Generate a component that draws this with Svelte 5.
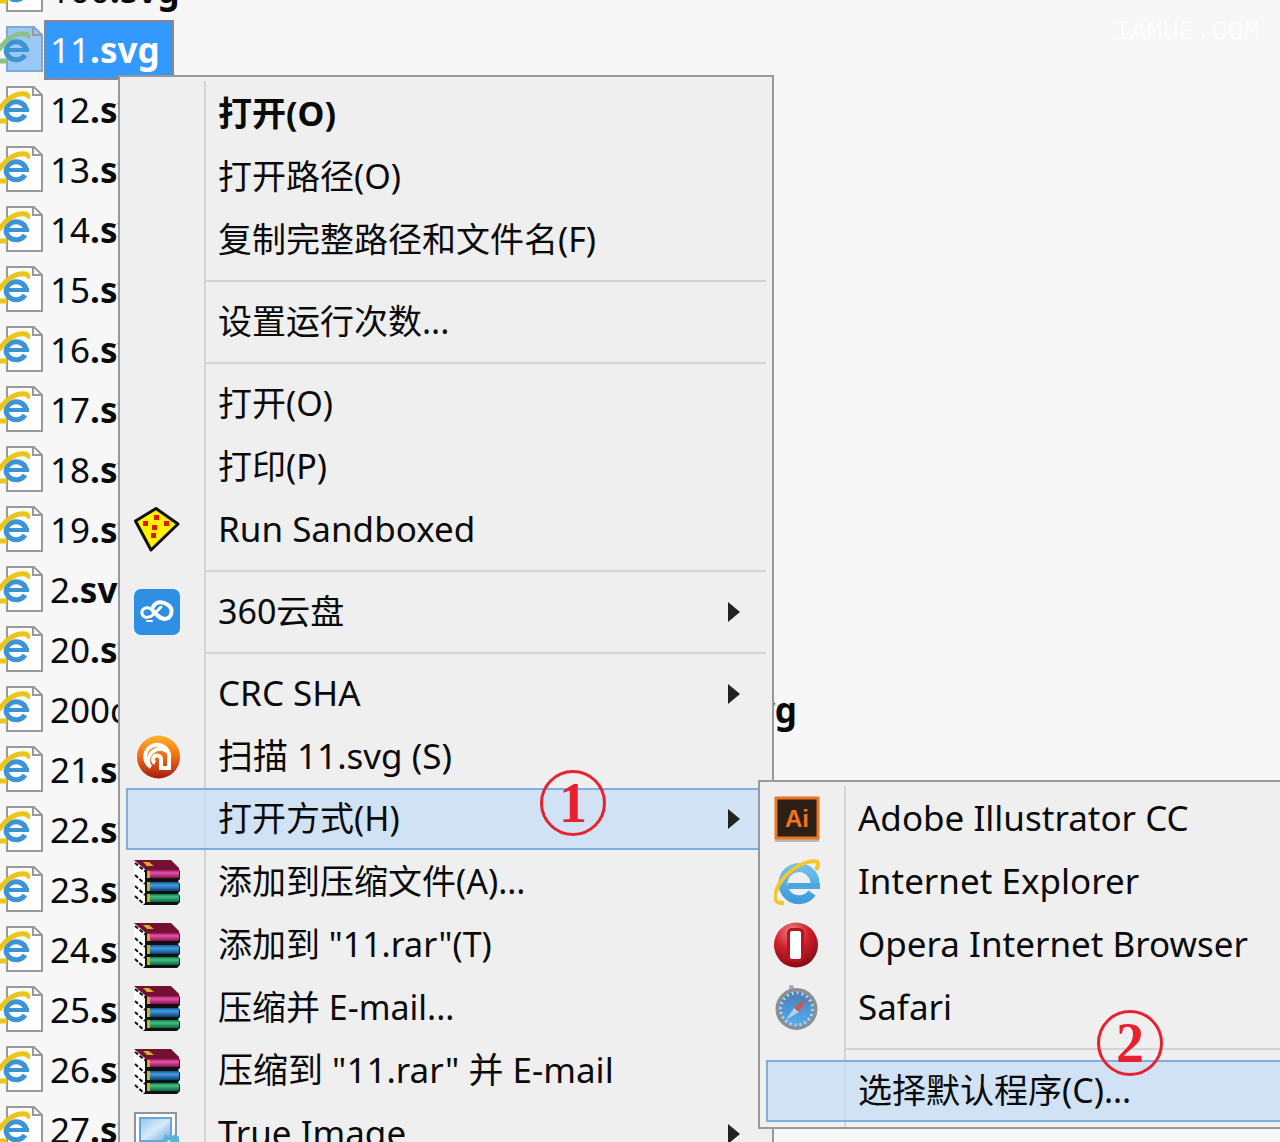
<script>
  const names = ['100', '11', '12', '13', '14', '15', '16', '17', '18', '19', '2', '20', '200', '21', '22', '23', '24', '25', '26', '27'];
  const files = names.map((n) => ({ base: n === '200' ? '200d' : n, long: n === '200', selected: n === '11' }));

  const menu = [
    { label: '打开(O)', bold: true },
    { label: '打开路径(O)' },
    { label: '复制完整路径和文件名(F)' },
    { sep: true },
    { label: '设置运行次数...' },
    { sep: true },
    { label: '打开(O)' },
    { label: '打印(P)' },
    { label: 'Run Sandboxed', icon: 'sandbox', latin: true },
    { sep: true },
    { label: '360云盘', icon: 'cloud', sub: true },
    { sep: true },
    { label: 'CRC SHA', sub: true, latin: true },
    { label: '扫描 11.svg (S)', icon: 'scan', latin: true },
    { label: '打开方式(H)', sub: true, active: true },
    { label: '添加到压缩文件(A)...', icon: 'rar' },
    { label: '添加到 "11.rar"(T)', icon: 'rar' },
    { label: '压缩并 E-mail...', icon: 'rar' },
    { label: '压缩到 "11.rar" 并 E-mail', icon: 'rar', latin: true },
    { label: 'True Image', icon: 'image', sub: true, latin: true }
  ];

  const openWith = [
    { label: 'Adobe Illustrator CC', icon: 'ai', latin: true },
    { label: 'Internet Explorer', icon: 'ie', latin: true },
    { label: 'Opera Internet Browser', icon: 'opera', latin: true },
    { label: 'Safari', icon: 'safari', latin: true },
    { sep: true },
    { label: '选择默认程序(C)...', active: true }
  ];
</script>

{#snippet glyph(name)}
  <svg class="icon" viewBox="0 0 46 46" aria-hidden="true">
    {#if name === 'sandbox'}
      <path d="M1.500 14 L22 1.500 L44 17 L17 43 Z" fill="#fff200" stroke="#111" stroke-width="3" stroke-linejoin="round" />
      <g fill="#e8140c"><path d="M20 8h5v5h-5zM9 14h5v5H9zM30 14h5v5h-5zM18 18h5v5h-5zM17 26h5v5h-5z" /></g>
    {:else if name === 'cloud'}
      <rect x="0" y="0" width="46" height="46" rx="7" fill="#2f8fe3" />
      <g fill="none" stroke="#fff" stroke-linecap="round">
        <path d="M26 29L17 20C12 17 7 20 8 25C10 30 16 29 20 25L27 18" stroke-width="3" />
        <path d="M19 18C22 12 29 12 34 16C40 20 38 29 31 30C26 30 23 26 19 22" stroke-width="4" />
        <path d="M13 32H18" stroke-width="2" />
      </g>
    {:else if name === 'scan'}
      <circle cx="24.500" cy="23" r="21.500" fill="url(#scanFill)" />
      <path d="M17 33A12 12 0 1 1 35 25V34H27V26A4 4 0 1 0 21 29" fill="none" stroke="#fff" stroke-width="4" />
      <path d="M15 31A12 12 0 0 1 33 17" fill="none" stroke="#fff" stroke-width="4" />
    {:else if name === 'rar'}
      <path d="M0 2L12 10V46L0 35Z" fill="#fff" />
      <path d="M11 9H44L46 12V20L44 22L46 25V32L44 34L46 37V43L43 46H11Z" fill="#111" />
      <path d="M1 4L12 13M1 16L11 25M1 27L11 36M1 37L11 46" stroke="#111" stroke-width="2" stroke-dasharray="4 2" />
      <path d="M0 1H37L45 9V12H13Z" fill="#741032" />
      <path d="M13 11H45V19H13Z" fill="url(#pinkFill)" />
      <path d="M13 23H45V32H13Z" fill="url(#blueFill)" />
      <path d="M13 35H45V43H13Z" fill="url(#greenFill)" />
      <path d="M9 3h6l5 4h-7zM13 12h3v7h-3zM13 23h3v9h-3zM13 35h3v8h-3z" fill="#cdb52a" />
    {:else if name === 'image'}
      <rect x="1" y="2" width="41" height="33" fill="#fff" stroke="#8d969e" stroke-width="2" />
      <rect x="6" y="7" width="31" height="23" fill="url(#screenFill)" stroke="#6ba5d5" stroke-width="2" />
      <path d="M25 32l5-3 1-6 5 4 5-4 4 3v20H26z" fill="#54b4dc" />
      <path d="M31 32l4-3 4 4-4 5z" fill="#d9f3fb" />
    {:else if name === 'ai'}
      <rect x="1" y="3" width="44" height="43" fill="#b9b9b9" />
      <rect x="2" y="2" width="42" height="40" fill="#2b1f18" stroke="#ee7420" stroke-width="3" />
      <text class="ai" x="23" y="31" text-anchor="middle">Ai</text>
    {:else if name === 'ie'}
      <path d="M41 25A16 16 0 1 0 38 34" fill="none" stroke="url(#ieFill)" stroke-width="9" />
      <path d="M14 27H46" stroke="#4ba6dd" stroke-width="6" />
      <path d="M10 44C-8 46 4 22 17 12C28 3 44 -1 44 5Q44 8 42 11" fill="none" stroke="#f7c52c" stroke-width="4" />
    {:else if name === 'opera'}
      <ellipse cx="22" cy="23" rx="22" ry="22.500" fill="url(#operaFill)" />
      <rect x="13" y="6" width="17" height="34" rx="5" fill="#b3161f" />
      <rect x="16" y="9" width="11" height="28" rx="2" fill="#fff" />
    {:else if name === 'safari'}
      <rect x="15" y="0" width="5" height="6" rx="2" fill="#a9adb2" />
      <circle cx="22.500" cy="24" r="19" fill="url(#safariFill)" stroke="#8b9097" stroke-width="4" />
      <circle cx="22.500" cy="24" r="16" fill="none" stroke="#bcd0e2" stroke-width="3" stroke-dasharray="2 3" />
      <path d="M33 13L25 27l-5-4z" fill="#dd5348" />
      <path d="M12 35l8-12 5 4z" fill="#a9d4f3" />
    {/if}
  </svg>
{/snippet}

{#snippet items(list)}
  {#each list as item}
    {#if item.sep}
      <div class="sep" role="separator"></div>
    {:else}
      <button type="button" role="menuitem" class="item" class:bold={item.bold} class:latin={item.latin} class:active={item.active}>
        <span class="slot">{#if item.icon}{@render glyph(item.icon)}{/if}</span>
        <span class="label">{item.label}</span>
        {#if item.sub}
          <svg class="arrow" viewBox="0 0 12 20" aria-hidden="true"><path d="M0 0L12 10L0 20Z" /></svg>
        {/if}
      </button>
    {/if}
  {/each}
{/snippet}

<svg class="defs" aria-hidden="true">
  <defs>
    <linearGradient id="scanFill" x1="0" y1="0" x2="0" y2="1"><stop offset="0" stop-color="#ffb52e" /><stop offset=".5" stop-color="#ee6a14" /><stop offset="1" stop-color="#a51c10" /></linearGradient>
    <linearGradient id="pinkFill" x1="0" y1="0" x2="0" y2="1"><stop offset="0" stop-color="#a0105c" /><stop offset=".35" stop-color="#e058a8" /><stop offset="1" stop-color="#8b0f50" /></linearGradient>
    <linearGradient id="blueFill" x1="0" y1="0" x2="0" y2="1"><stop offset="0" stop-color="#0b5a9c" /><stop offset=".35" stop-color="#4a9bdc" /><stop offset="1" stop-color="#073f78" /></linearGradient>
    <linearGradient id="greenFill" x1="0" y1="0" x2="0" y2="1"><stop offset="0" stop-color="#0b7a48" /><stop offset=".35" stop-color="#45bd85" /><stop offset="1" stop-color="#06663a" /></linearGradient>
    <linearGradient id="screenFill" x1="0" y1="0" x2="1" y2="1"><stop offset="0" stop-color="#8ec4ee" /><stop offset=".5" stop-color="#d8ecfa" /><stop offset="1" stop-color="#5ea6df" /></linearGradient>
    <linearGradient id="ieFill" x1="0" y1="0" x2="0" y2="1"><stop offset="0" stop-color="#6cc0ea" /><stop offset="1" stop-color="#3f9ddb" /></linearGradient>
    <radialGradient id="operaFill" cx=".4" cy=".2" r=".8"><stop offset="0" stop-color="#f08080" /><stop offset=".5" stop-color="#cf1f2a" /><stop offset="1" stop-color="#8b0b12" /></radialGradient>
    <linearGradient id="safariFill" x1="0" y1="0" x2="0" y2="1"><stop offset="0" stop-color="#4a78b4" /><stop offset="1" stop-color="#56b4ee" /></linearGradient>
  </defs>
</svg>

<main class="desk">
  <ul class="files">
    {#each files as file}
      <li class="file" class:selected={file.selected}>
        <svg class="doc" viewBox="0 0 44 46" aria-hidden="true">
          <path class="sheet" d="M7 1H34L42 9V45H7Z" />
          <path class="fold" d="M33 1V9H41" />
          <path class="ring" d="M26 23A10 9 0 1 0 25 29" />
          <path class="bar" d="M8 24H29" />
          <path class="swoosh" d="M-1 24C6 13 16 6 26 8Q29 9 27 12M0 35H7" />
        </svg>
        <span class="name" class:long={file.long}><span>{file.base}{#if !file.long}<b>.svg</b>{/if}</span>{#if file.long}<b>.svg</b>{/if}</span>
      </li>
    {/each}
  </ul>

  <div class="menu main-menu" role="menu">{@render items(menu)}</div>
  <div class="menu sub-menu" role="menu">{@render items(openWith)}</div>

  <span class="step one">1</span>
  <span class="step two">2</span>
  <span class="mark">IAMUE.COM</span>
</main>

<style>
  :global(body) { margin: 0; background: #f7f7f7; }
  .defs { position: absolute; width: 0; height: 0; }
  .desk {
    position: relative;
    height: 100vh;
    overflow: hidden;
    background: #f7f7f7;
    color: #0a0a0a;
    font-family: "Noto Sans", "Noto Sans CJK SC", sans-serif;
    font-size: 34px;
  }
  .files { list-style: none; margin: -40px 0 0; padding: 0; font-size: 35px; }
  .file { display: flex; align-items: center; height: 60px; }
  .doc { width: 44px; height: 46px; flex: none; margin-bottom: 2px; }
  .sheet { fill: #fdfdfd; stroke: #999; stroke-width: 2; }
  .fold { fill: none; stroke: #999; stroke-width: 2; }
  .ring { fill: none; stroke: #3b94d4; stroke-width: 5; }
  .bar { fill: none; stroke: #3b94d4; stroke-width: 4; }
  .swoosh { fill: none; stroke: #ecc51c; stroke-width: 5; }
  .name { box-sizing: border-box; height: 60px; padding: 0 14px 0 6px; line-height: 60px; white-space: nowrap; }
  .long { display: flex; justify-content: space-between; width: 767px; }
  .selected .name { background: #3399ff; color: #fff; outline: 2px dotted #d9762b; outline-offset: -2px; }
  .selected .sheet { fill: #9bc8f5; stroke: #7fa9d6; }
  .selected .swoosh { stroke: #8fc08a; }

  .menu {
    position: absolute;
    box-sizing: border-box;
    width: 656px;
    padding: 5px 6px;
    border: 2px solid #999;
    background: linear-gradient(#d4d4d4, #d4d4d4) 84px 4px / 2px 100% no-repeat #efefef;
  }
  .main-menu { left: 118px; top: 75px; }
  .sub-menu { left: 758px; top: 780px; }
  .item {
    display: flex;
    align-items: center;
    box-sizing: border-box;
    width: 100%;
    height: 63px;
    padding: 0 24px 0 6px;
    border: 2px solid transparent;
    background: none;
    color: inherit;
    font: inherit;
    text-align: left;
  }
  .latin { font-size: 35px; }
  .active { height: 62px; border-color: #7eade0; background: rgba(195, 221, 246, 0.7); }
  .slot { display: flex; width: 84px; flex: none; }
  .icon { width: 46px; height: 46px; }
  .label { flex: 1; padding-bottom: 2px; white-space: nowrap; line-height: 56px; }
  .bold { font-weight: 700; }
  .arrow { width: 12px; height: 20px; fill: #222; }
  .sep { height: 19px; margin-left: 78px; background: linear-gradient(#d4d4d4, #d4d4d4) 0 9px / 100% 2px no-repeat; }
  .sub-menu .sep { height: 21px; }
  .ai { font: 700 24px "Liberation Sans", sans-serif; fill: #ee7420; }

  .step {
    position: absolute;
    box-sizing: border-box;
    width: 66px;
    height: 66px;
    border: 3px solid #e8202f;
    border-radius: 50%;
    color: #e8202f;
    font: 700 56px/60px "Liberation Serif", serif;
    text-align: center;
  }
  .one { left: 540px; top: 770px; }
  .two { left: 1097px; top: 1010px; }
  .mark { position: absolute; right: 20px; top: 16px; color: #fcfcfc; font: 27px/32px "Liberation Mono", monospace; }
</style>
